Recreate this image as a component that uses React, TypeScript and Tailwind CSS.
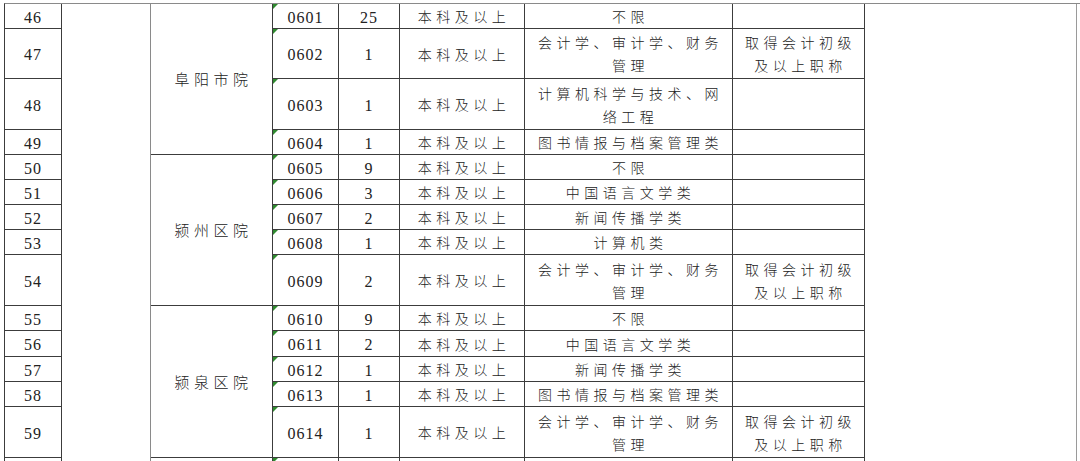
import React from "react";

type Row = {
  no: string;
  code: string;
  num: string;
  major: string[];
  req: string[];
  tall?: boolean;
};

const rows: Row[] = [
  { no: "46", code: "0601", num: "25", major: ["不限"], req: [] },
  { no: "47", code: "0602", num: "1", major: ["会计学、审计学、财务", "管理"], req: ["取得会计初级", "及以上职称"], tall: true },
  { no: "48", code: "0603", num: "1", major: ["计算机科学与技术、网", "络工程"], req: [], tall: true },
  { no: "49", code: "0604", num: "1", major: ["图书情报与档案管理类"], req: [] },
  { no: "50", code: "0605", num: "9", major: ["不限"], req: [] },
  { no: "51", code: "0606", num: "3", major: ["中国语言文学类"], req: [] },
  { no: "52", code: "0607", num: "2", major: ["新闻传播学类"], req: [] },
  { no: "53", code: "0608", num: "1", major: ["计算机类"], req: [] },
  { no: "54", code: "0609", num: "2", major: ["会计学、审计学、财务", "管理"], req: ["取得会计初级", "及以上职称"], tall: true },
  { no: "55", code: "0610", num: "9", major: ["不限"], req: [] },
  { no: "56", code: "0611", num: "2", major: ["中国语言文学类"], req: [] },
  { no: "57", code: "0612", num: "1", major: ["新闻传播学类"], req: [] },
  { no: "58", code: "0613", num: "1", major: ["图书情报与档案管理类"], req: [] },
  { no: "59", code: "0614", num: "1", major: ["会计学、审计学、财务", "管理"], req: ["取得会计初级", "及以上职称"], tall: true },
];

const courts: Record<number, { name: string; span: string }> = {
  0: { name: "阜阳市院", span: "row-span-4" },
  4: { name: "颍州区院", span: "row-span-5" },
  9: { name: "颍泉区院", span: "row-span-5" },
};

const cell =
  "border-r border-b border-[#3c3c3c] flex items-center justify-center text-center pt-[3px]";
const num = "text-[16px] tracking-[1px]";
const zh = "text-[14px] tracking-[4.5px] pl-[4px] leading-[23px] font-light";

function Tri() {
  return (
    <span className="absolute left-0 top-0 w-0 h-0 border-t-[5px] border-t-[#2f8a2f] border-r-[5px] border-r-transparent" />
  );
}

function Lines({ items }: { items: string[] }) {
  return (
    <div className={zh}>
      {items.map((t, i) => (
        <div key={i}>{t}</div>
      ))}
    </div>
  );
}

export default function App() {
  return (
    <div
      className="w-[1080px] h-[461px] overflow-hidden bg-white text-[#222] pt-[3px] pl-[4px]"
      style={{ fontFamily: "'Liberation Serif', 'Noto Sans CJK SC', serif" }}
    >
      <div className="grid grid-cols-[57px_89px_122px_66px_61px_125px_208px_132px_212px] grid-rows-[25px_50px_51px_25px_25px_25px_25px_25px_51px_25px_26px_25px_25px_51px_30px] border-l border-t border-l-[#3c3c3c] border-t-[#8a8a8a]">
        {rows.map((r, i) => (
          <React.Fragment key={r.no}>
            <div className={`${cell} ${num}`}>{r.no}</div>
            {i === 0 && (
              <div className="row-span-15 border-r border-r-[#8a8a8a]" />
            )}
            {courts[i] && (
              <div className={`${courts[i].span} ${cell}`}>
                <div className="text-[15px] tracking-[4.5px] pl-[4px] font-light">
                  {courts[i].name}
                </div>
              </div>
            )}
            <div className={`${cell} ${num} relative`}>
              <Tri />
              {r.code}
            </div>
            <div className={`${cell} ${num}`}>{r.num}</div>
            <div className={cell}>
              <div className={zh}>本科及以上</div>
            </div>
            <div className={cell}>
              <Lines items={r.major} />
            </div>
            <div className={cell}>
              <Lines items={r.req} />
            </div>
            {i === 0 && (
              <div className="row-span-15 border-r border-r-[#9a9a9a]" />
            )}
          </React.Fragment>
        ))}
        <div className={cell} />
        <div className={cell} />
        <div className={`${cell} relative`}>
          <Tri />
        </div>
        <div className={cell} />
        <div className={cell} />
        <div className={cell} />
        <div className={cell} />
      </div>
    </div>
  );
}
